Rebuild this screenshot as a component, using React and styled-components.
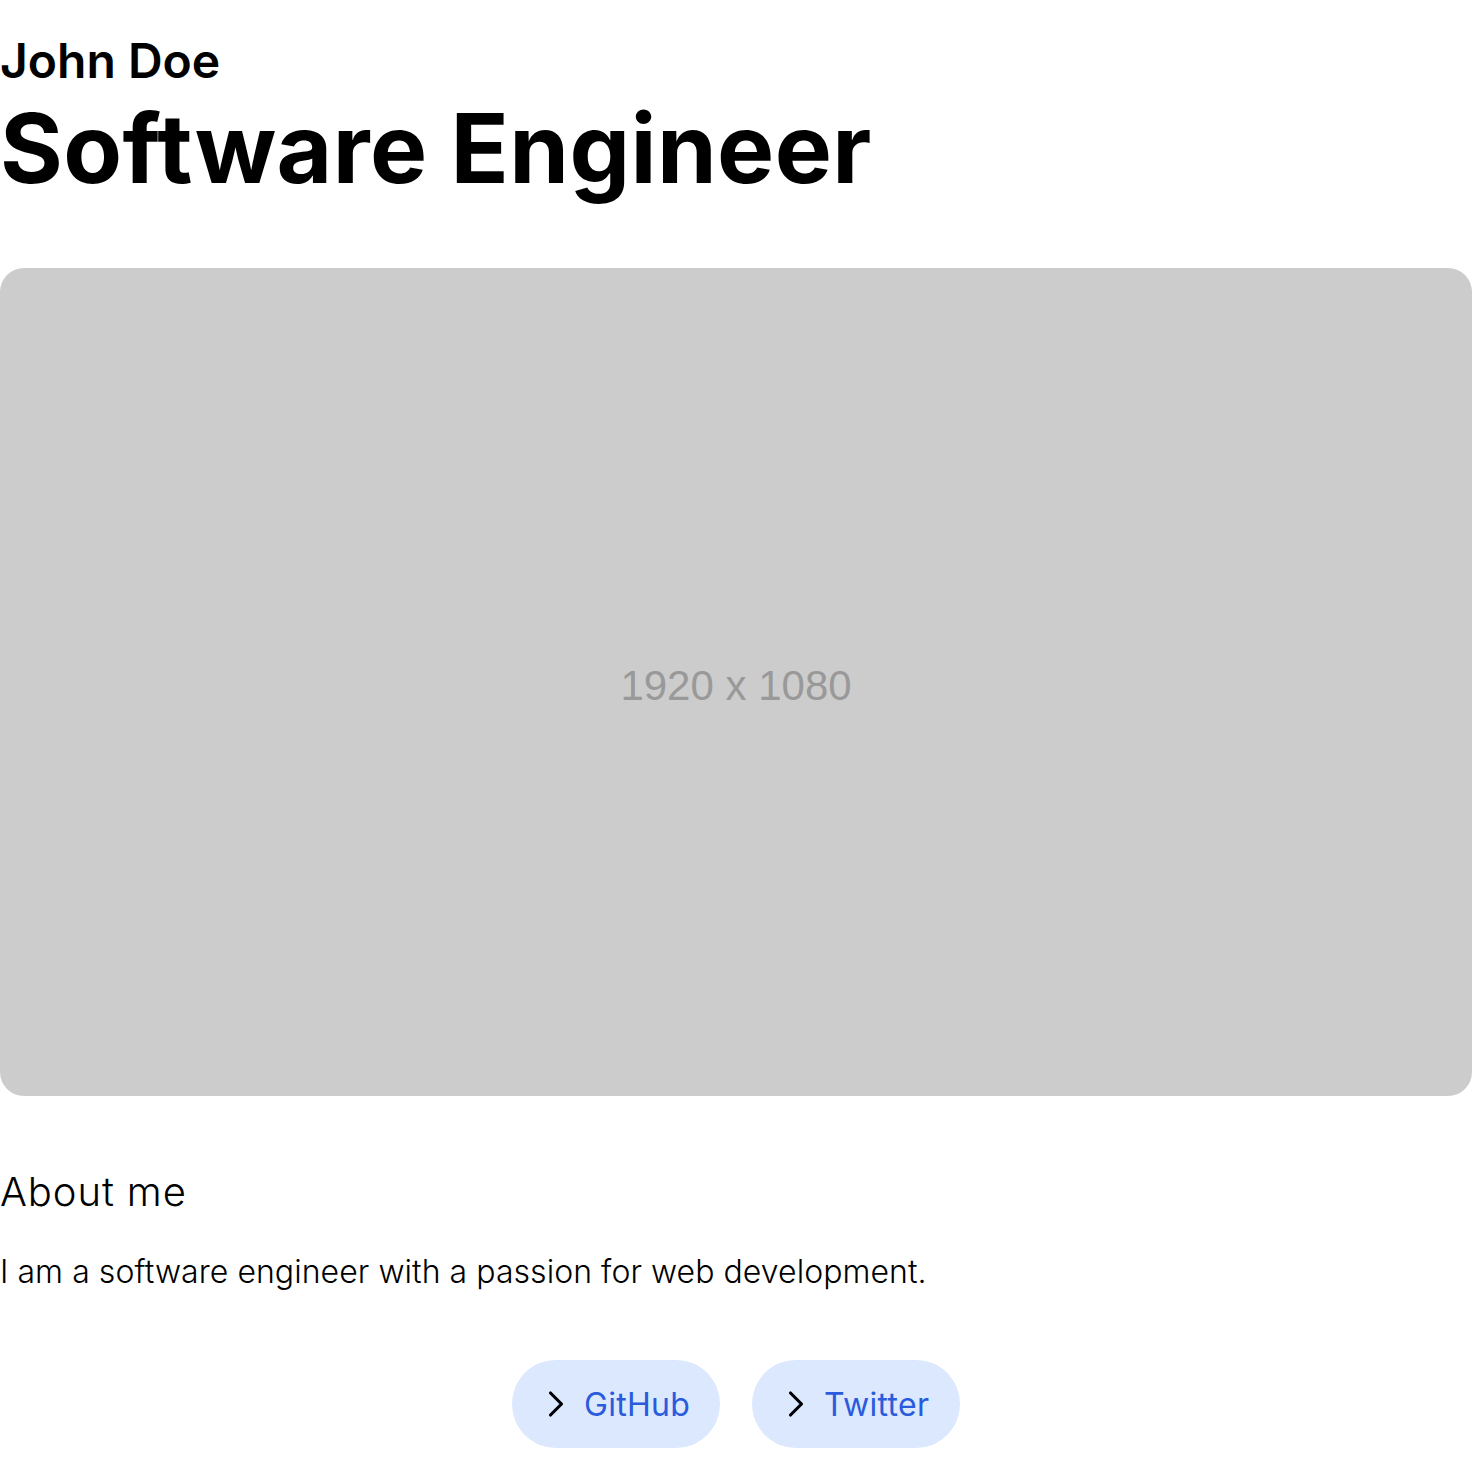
import React from "react";
import styled, { createGlobalStyle } from "styled-components";

const Global = createGlobalStyle`
  html, body { margin: 0; padding: 0; background: #fff; }
  body { font-family: Inter, "Noto Sans", sans-serif; color: #000; }
`;

const Page = styled.main`
  display: flex;
  flex-direction: column;
  width: 1472px;
`;

const Name = styled.h2`
  margin: 32px 0 0;
  font-size: 48px;
  font-weight: 600;
  line-height: 58px;
`;

const Title = styled.h1`
  margin: 0;
  font-size: 96px;
  font-weight: 700;
  line-height: 116px;
  letter-spacing: 0.4px;
`;

const Hero = styled.div`
  margin-top: 62px;
  width: 100%;
  aspect-ratio: 16 / 9;
  background: #cccccc;
  border-radius: 24px;
  display: flex;
  align-items: center;
  justify-content: center;
  padding-top: 8px;
  box-sizing: border-box;
  color: #999999;
  font-family: "Liberation Sans", Arial, sans-serif;
  font-size: 42px;
`;

const Section = styled.section`
  margin-top: 72px;
  display: flex;
  flex-direction: column;
`;

const Heading = styled.h3`
  margin: 0;
  font-size: 40px;
  font-weight: 300;
  line-height: 48px;
  letter-spacing: 0.9px;
`;

const Text = styled.p`
  margin: 36px 0 0;
  font-size: 32px;
  font-weight: 300;
  line-height: 40px;
  letter-spacing: 0.05px;
`;

const Links = styled.nav`
  margin-top: 68px;
  display: flex;
  justify-content: center;
  gap: 32px;
`;

const LinkButton = styled.a`
  display: inline-flex;
  align-items: center;
  gap: 6px;
  height: 88px;
  width: 208px;
  padding: 0 0 0 22px;
  box-sizing: border-box;
  border-radius: 44px;
  background: #dbe8fe;
  color: #2a5bdc;
  font-size: 32px;
  font-weight: 400;
  letter-spacing: 0.3px;
  text-decoration: none;
`;

const Chevron = () => (
  <svg width="44" height="44" viewBox="0 0 24 24" fill="none" stroke="#000" strokeWidth="1.7" strokeLinecap="round" strokeLinejoin="round">
    <path d="M9 6l6 6-6 6" />
  </svg>
);

export default function App() {
  return (
    <Page>
      <Global />
      <Name>John Doe</Name>
      <Title>Software Engineer</Title>
      <Hero>1920 x 1080</Hero>
      <Section>
        <Heading>About me</Heading>
        <Text>I am a software engineer with a passion for web development.</Text>
      </Section>
      <Links>
        <LinkButton href="#">
          <Chevron />
          GitHub
        </LinkButton>
        <LinkButton href="#">
          <Chevron />
          Twitter
        </LinkButton>
      </Links>
    </Page>
  );
}
